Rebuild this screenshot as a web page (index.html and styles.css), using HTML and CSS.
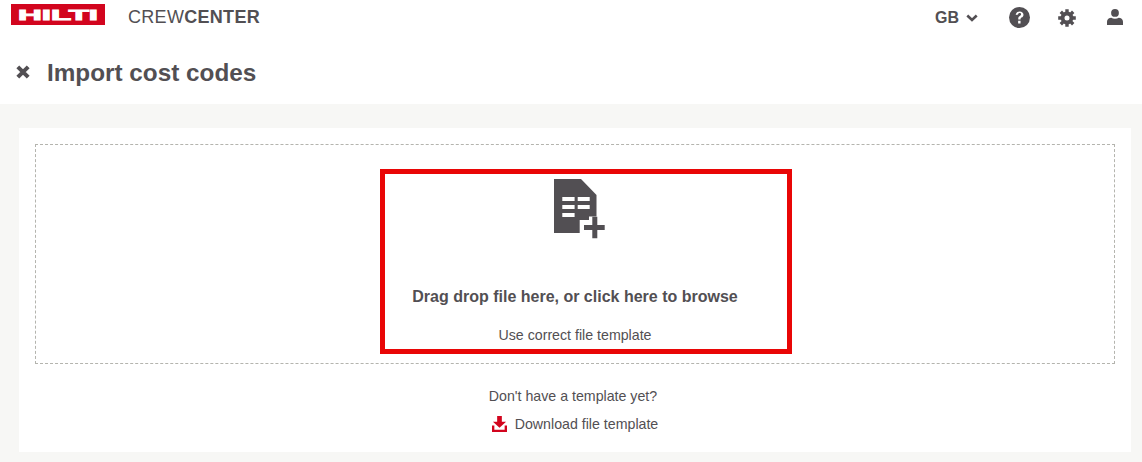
FILE: index.html
```html
<!DOCTYPE html>
<html lang="en">
<head>
    <meta charset="UTF-8">
    <meta name="viewport" content="width=device-width, initial-scale=1.0">
    <title>Import cost codes</title>
    <link rel="stylesheet" href="styles.css">
</head>
<body>
    <div class="topbar">
        <div class="brand">
            <svg class="logo" width="94" height="21" viewBox="0 0 94 21">
                <rect width="94" height="21" fill="#d2051e"/>
                <text x="47" y="15.600" text-anchor="middle" textLength="80" lengthAdjust="spacingAndGlyphs" class="logo-text">HILTI</text>
            </svg>
            <span class="app-name">CREW<b>CENTER</b></span>
        </div>
        <div class="tools">
            <span class="lang">GB
                <svg width="12" height="8" viewBox="0 0 12 8"><path d="M1.300 1.500 6 6 10.700 1.500" fill="none" stroke="#524f53" stroke-width="2.600"/></svg>
            </span>
            <svg class="help" width="21" height="21" viewBox="0 0 20 20">
                <circle cx="10" cy="10" r="10" fill="#524f53"/>
                <path d="M6.400 7.600C6.600 5.400 8.100 4.200 10.200 4.200c2.100 0 3.600 1.300 3.600 3.100 0 1.400-.8 2.100-1.800 2.800-.8.5-1 .8-1 1.700H8.800v-.8c0-1.200.5-1.900 1.500-2.500.8-.5 1.200-.9 1.200-1.600 0-.8-.6-1.300-1.400-1.300-.9 0-1.400.6-1.500 1.600zM8.700 13.200h2.300v2.400H8.700z" fill="#fff"/>
            </svg>
            <svg class="gear" width="18" height="18" viewBox="0 0 18 18">
                <path d="M9 2.600a6.400 6.400 0 1 0 0 12.800 6.400 6.400 0 1 0 0-12.800zM9 6.500a2.500 2.500 0 1 1 0 5 2.500 2.500 0 1 1 0-5z" fill="#524f53" fill-rule="evenodd"/>
                <path d="M9 .2V3.500M9 14.500V17.800M.2 9H3.500M14.500 9H17.800M2.800 2.800 5.100 5.100M12.900 12.900 15.200 15.200M2.800 15.200 5.100 12.900M12.900 5.100 15.200 2.800" stroke="#524f53" stroke-width="3.400"/>
            </svg>
            <svg class="user" width="16" height="16" viewBox="0 0 16 16">
                <circle cx="8" cy="3.900" r="3.900" fill="#524f53"/>
                <path d="M0 16v-3.200C0 10.300 2.200 8.800 4.300 8.800c1 .6 2.200.9 3.700.9s2.700-.3 3.700-.9c2.100 0 4.300 1.500 4.300 4V16z" fill="#524f53"/>
            </svg>
        </div>
    </div>

    <div class="page-title">
        <svg class="close" width="14" height="14" viewBox="0 0 14 14"><path d="M1.800 1.800 12.200 12.200M12.200 1.800 1.800 12.200" stroke="#524f53" stroke-width="4"/></svg>
        <h1>Import cost codes</h1>
    </div>

    <div class="content">
        <div class="card">
            <div class="dropzone">
                <svg class="file-icon" width="61" height="60" viewBox="-9 0 61 60">
                    <path d="M0 0H27L42.500 16V37.500H35V41H25.700V54H0z" fill="#524f53"/>
                    <path d="M8.300 18H20.600V22H8.300zM23.700 18H35.700V22H23.700zM8.300 26H20.600V30H8.300zM23.700 26H35.700V30H23.700zM8.300 34H20.600V38H8.300z" fill="#fff"/>
                    <path d="M38.300 37.700H43.300V46H50.700V51H43.300V59.300H38.300V51H30V46H38.300z" fill="#524f53"/>
                </svg>
                <p class="drop-title">Drag drop file here, or click here to browse</p>
                <p class="drop-hint">Use correct file template</p>
                <div class="highlight"></div>
            </div>
            <p class="no-template">Don't have a template yet?</p>
            <a class="download" href="#">
                <svg width="15" height="16" viewBox="0 0 16 17">
                    <path d="M5.500 0H10.500V6H15L8 12.500 1 6H5.500z" fill="#d2051e"/>
                    <path d="M0 10H2.500V14.500H13.500V10H16V17H0z" fill="#d2051e"/>
                </svg>
                Download file template
            </a>
        </div>
    </div>
</body>
</html>
```

FILE: styles.css
```css
* {
    margin: 0;
    padding: 0;
    box-sizing: border-box;
}

html, body {
    height: 100%;
}

body {
    background: #f7f7f5;
    color: #524f53;
    font-family: 'Liberation Sans', Arial, sans-serif;
    overflow: hidden;
}

.topbar {
    height: 42px;
    background: #fff;
    display: flex;
    justify-content: space-between;
    padding: 4px 19px 0 11px;
}

.brand {
    display: flex;
    align-items: flex-start;
    gap: 23px;
}

.logo {
    display: block;
}

.logo-text {
    font-weight: 700;
    font-size: 14.500px;
    fill: #fff;
    stroke: #fff;
    stroke-width: 0.900;
}

.app-name {
    font-size: 18px;
    line-height: 26px;
    letter-spacing: 0.300px;
}

.tools {
    display: flex;
    align-items: flex-start;
}

.lang {
    font-size: 16px;
    font-weight: 700;
    line-height: 27px;
    display: flex;
    align-items: center;
    gap: 7px;
}

.help {
    margin: 3px 0 0 31px;
}

.gear {
    margin: 5px 0 0 28px;
}

.user {
    margin: 5px 0 0 31px;
}

.page-title {
    height: 62px;
    background: #fff;
    display: flex;
    align-items: flex-start;
    padding: 18px 0 0 16px;
}

.close {
    margin-top: 5px;
}

.page-title h1 {
    font-size: 24.300px;
    font-weight: 700;
    line-height: 26px;
    margin-left: 17px;
}

.content {
    padding: 24px 11px 0 19px;
}

.card {
    background: #fff;
    height: 324px;
    padding: 16px 16px 0;
    text-align: center;
}

.dropzone {
    position: relative;
    height: 220px;
    border: 1px dashed #b4b4ae;
    padding-top: 34px;
}

.file-icon {
    display: block;
    margin: 0 auto;
}

.drop-title {
    font-size: 16px;
    font-weight: 700;
    line-height: 20px;
    margin-top: 48px;
}

.drop-hint {
    font-size: 14.200px;
    line-height: 18px;
    margin-top: 19px;
}

/* annotation box drawn over the dropzone */
.highlight {
    position: absolute;
    left: 344px;
    top: 24px;
    width: 412px;
    height: 185px;
    border: 5px solid #e90606;
}

.no-template {
    font-size: 14.200px;
    line-height: 18px;
    margin-top: 23px;
    padding-right: 4px;
}

.download {
    font-size: 14.200px;
    line-height: 18px;
    color: #524f53;
    text-decoration: none;
    display: inline-flex;
    align-items: center;
    gap: 8px;
    margin-top: 10px;
}
```
